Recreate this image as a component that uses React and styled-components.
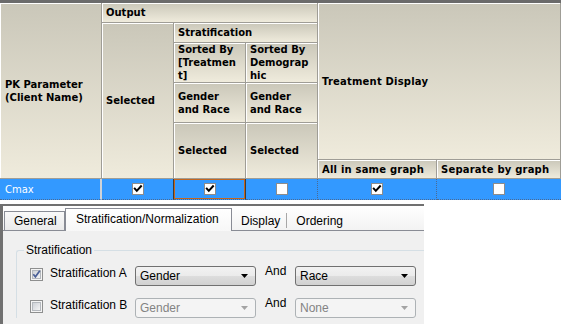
import React from 'react';
import styled, { createGlobalStyle, css } from 'styled-components';

const Global = createGlobalStyle`
  html, body { margin: 0; padding: 0; background: #ffffff; }
  body { width: 561px; height: 324px; overflow: hidden; font-family: "DejaVu Sans", sans-serif; }
`;

const Page = styled.div`
  width: 561px;
  height: 324px;
  display: flex;
  flex-direction: column;
  background: #ffffff;
  overflow: hidden;
`;

/* ---------- grid ---------- */
const Grid = styled.div`
  border-top: 3px solid #6b6b6b;
  display: flex;
  flex-direction: column;
  flex: none;
`;

const HeaderBand = styled.div`
  display: flex;
  height: 176px;
`;

const Stack = styled.div`
  display: flex;
  flex-direction: column;
`;

const Split = styled.div`
  display: flex;
`;

const HCell = styled.div`
  box-sizing: border-box;
  flex: none;
  width: ${p => p.$w}px;
  height: ${p => p.$h}px;
  display: flex;
  align-items: center;
  padding-left: ${p => (p.$pl ?? 4)}px;
  background: linear-gradient(#cac7b9, #efebdc);
  border-right: 1px solid #9f9d96;
  border-bottom: 1px solid #9f9d96;
  box-shadow: inset 1px 1px 0 #ffffff;
  font: bold 10px/13px "DejaVu Sans", sans-serif;
  letter-spacing: ${p => p.$ls || 0}px;
  color: #000000;
  white-space: nowrap;
  overflow: hidden;
`;

const HText = styled.span`
  display: block;
`;

const DataRow = styled.div`
  display: flex;
  height: 21px;
`;

const sepStyles = {
  light: css`border-right: 2px solid #cfd3d8;`,
  dark: css`border-right: 1px solid #3c3c3c;`,
  dotted: css`border-right: 1px dotted #4b6a93;`,
  none: css`border-right: 0;`,
};

const DCell = styled.div`
  box-sizing: border-box;
  flex: none;
  width: ${p => p.$w}px;
  height: 21px;
  display: flex;
  align-items: center;
  justify-content: ${p => (p.$start ? 'flex-start' : 'center')};
  padding-left: ${p => (p.$start ? '5px' : '0')};
  background: #3399ff;
  border-bottom: 1px dotted #4b6a93;
  ${p => sepStyles[p.$sep || 'none']}
  ${p => p.$focus && css`box-shadow: inset 0 0 0 1px #c4661f;`}
`;

const RowName = styled.span`
  font: 10px/13px "DejaVu Sans", sans-serif;
  color: #ffffff;
`;

const GridBox = styled.span`
  box-sizing: border-box;
  width: 12px;
  height: 12px;
  background: #ffffff;
  border: 1px solid #8c8c8c;
  display: flex;
  align-items: center;
  justify-content: center;
`;

function GridCheck({ checked }) {
  return (
    <GridBox>
      {checked && (
        <svg width="10" height="10" viewBox="0 0 10 10">
          <path d="M1.8 4.6 L3.8 6.8 L8 2.2" stroke="#000" strokeWidth="2" fill="none" strokeLinecap="square" />
        </svg>
      )}
    </GridBox>
  );
}

/* ---------- tab panel ---------- */
const TabPanel = styled.div`
  box-sizing: border-box;
  margin-top: 4px;
  width: 424px;
  flex: 1;
  border-left: 3px solid #707070;
  border-top: 2px solid #707070;
  display: flex;
  flex-direction: column;
  background: #f0f0f0;
  overflow: hidden;
`;

const TabStrip = styled.div`
  box-sizing: border-box;
  height: 25px;
  flex: none;
  display: flex;
  align-items: flex-end;
  padding-left: 1px;
  background: linear-gradient(#ffffff, #f3f3f3);
  border-bottom: 1px solid #898c95;
`;

const Tab = styled.div`
  box-sizing: border-box;
  flex: none;
  display: flex;
  align-items: center;
  font: 12px/14px "Liberation Sans", Arial, sans-serif;
  color: #000000;
  white-space: nowrap;
  ${p => p.$variant === 'boxed' && css`
    width: 61px;
    height: 19px;
    padding-left: 9px;
    border: 1px solid #898c95;
    border-bottom: 0;
    background: linear-gradient(#f9f9f9, #eaeaea);
  `}
  ${p => p.$variant === 'active' && css`
    width: 167px;
    height: 23px;
    margin-bottom: -1px;
    padding-left: 10px;
    padding-bottom: 2px;
    border: 1px solid #898c95;
    border-bottom: 0;
    background: linear-gradient(#ffffff, #f7f7f7);
    position: relative;
  `}
  ${p => p.$variant === 'plain' && css`
    height: 19px;
    padding-left: 9px;
    padding-right: ${p.$pr || 0}px;
  `}
`;

const TabSep = styled.div`
  flex: none;
  width: 1px;
  height: 15px;
  margin-bottom: 2px;
  background: #a7a7a7;
`;

const TabBody = styled.div`
  flex: 1;
  padding: 19px 0 0 13px;
`;

const GroupBox = styled.div`
  position: relative;
  border-top: 1px solid #d5dfe5;
  border-left: 1px solid #d5dfe5;
  border-top-left-radius: 3px;
  padding: 15px 0 0 13px;
  display: flex;
  flex-direction: column;
  gap: 12px;
`;

const Legend = styled.span`
  position: absolute;
  top: -8px;
  left: 7px;
  padding: 0 2px;
  background: #f0f0f0;
  font: 12px/14px "Liberation Sans", Arial, sans-serif;
  color: #000000;
`;

const FormRow = styled.div`
  display: flex;
  align-items: flex-start;
  height: 20px;
`;

const RowLabel = styled.span`
  flex: none;
  width: ${p => p.$w}px;
  margin-left: ${p => p.$ml || 0}px;
  margin-top: ${p => p.$mt || 0}px;
  font: 12px/14px "Liberation Sans", Arial, sans-serif;
  color: #000000;
  white-space: nowrap;
`;

const CheckWrap = styled.span`
  flex: none;
  width: 13px;
  height: 13px;
  display: block;
`;

function WinCheck({ checked }) {
  return (
    <CheckWrap>
      <svg width="13" height="13" viewBox="0 0 13 13">
        <defs>
          <linearGradient id={checked ? 'cg1' : 'cg0'} x1="0" y1="0" x2="1" y2="1">
            <stop offset="0" stopColor="#cbcfd5" />
            <stop offset="1" stopColor="#f6f6f6" />
          </linearGradient>
        </defs>
        <rect x="0.5" y="0.5" width="12" height="12" fill="#f4f4f4" stroke="#8e8f8f" />
        <rect x="2.5" y="2.5" width="8" height="8" fill={`url(#${checked ? 'cg1' : 'cg0'})`} stroke="#b4b8bd" />
        {checked && (
          <path d="M3.3 6.3 L5.4 8.8 L9.8 2.8" stroke="#4a5f97" strokeWidth="1.7" fill="none" />
        )}
      </svg>
    </CheckWrap>
  );
}

const Combo = styled.div`
  box-sizing: border-box;
  flex: none;
  width: 121px;
  height: 20px;
  display: flex;
  align-items: center;
  justify-content: space-between;
  padding: 0 7px 0 4px;
  border-radius: 3px;
  font: 12px/14px "Liberation Sans", Arial, sans-serif;
  ${p => p.$disabled ? css`
    border: 1px solid #adb2b5;
    background: #f4f4f4;
    color: #838383;
  ` : css`
    border: 1px solid #707070;
    background: linear-gradient(#f2f2f2, #ebebeb 50%, #dddddd 50%, #d1d1d1);
    color: #000000;
  `}
`;

function ComboBox({ value, disabled }) {
  return (
    <Combo $disabled={disabled}>
      <span>{value}</span>
      <svg width="7" height="4" viewBox="0 0 7 4">
        <polygon points="0,0 7,0 3.5,4" fill={disabled ? '#a3a3a3' : '#000'} />
      </svg>
    </Combo>
  );
}

function StratRow({ label, checked, first, second, disabled }) {
  return (
    <FormRow>
      <WinCheck checked={checked} />
      <RowLabel $w={85} $ml={7}>{label}</RowLabel>
      <ComboBox value={first} disabled={disabled} />
      <RowLabel $w={30} $ml={9} $mt={-2}>And</RowLabel>
      <ComboBox value={second} disabled={disabled} />
    </FormRow>
  );
}

export default function App() {
  return (
    <>
      <Global />
      <Page>
        <Grid>
          <HeaderBand>
            <HCell $w={102} $h={176} $pl={5}>
              <HText>PK Parameter<br />(Client Name)</HText>
            </HCell>
            <Stack>
              <HCell $w={216} $h={20}><HText>Output</HText></HCell>
              <Split>
                <HCell $w={72} $h={156}><HText>Selected</HText></HCell>
                <Stack>
                  <HCell $w={144} $h={20}><HText>Stratification</HText></HCell>
                  <Split>
                    <HCell $w={72} $h={40}><HText>Sorted By<br />[Treatmen<br />t]</HText></HCell>
                    <HCell $w={72} $h={40}><HText>Sorted By<br />Demograp<br />hic</HText></HCell>
                  </Split>
                  <Split>
                    <HCell $w={72} $h={40}><HText>Gender<br />and Race</HText></HCell>
                    <HCell $w={72} $h={40}><HText>Gender<br />and Race</HText></HCell>
                  </Split>
                  <Split>
                    <HCell $w={72} $h={56}><HText>Selected</HText></HCell>
                    <HCell $w={72} $h={56}><HText>Selected</HText></HCell>
                  </Split>
                </Stack>
              </Split>
            </Stack>
            <Stack>
              <HCell $w={243} $h={157} $ls={0.2}><HText>Treatment Display</HText></HCell>
              <Split>
                <HCell $w={119} $h={19} $ls={0.2}><HText>All in same graph</HText></HCell>
                <HCell $w={124} $h={19} $ls={0.2}><HText>Separate by graph</HText></HCell>
              </Split>
            </Stack>
          </HeaderBand>
          <DataRow>
            <DCell $w={102} $sep="light" $start><RowName>Cmax</RowName></DCell>
            <DCell $w={72} $sep="dark"><GridCheck checked /></DCell>
            <DCell $w={72} $sep="dark" $focus><GridCheck checked /></DCell>
            <DCell $w={72} $sep="dotted"><GridCheck /></DCell>
            <DCell $w={119} $sep="dotted"><GridCheck checked /></DCell>
            <DCell $w={124} $sep="none"><GridCheck /></DCell>
          </DataRow>
        </Grid>

        <TabPanel>
          <TabStrip>
            <Tab $variant="boxed">General</Tab>
            <Tab $variant="active">Stratification/Normalization</Tab>
            <Tab $variant="plain" $pr={6}>Display</Tab>
            <TabSep />
            <Tab $variant="plain">Ordering</Tab>
          </TabStrip>
          <TabBody>
            <GroupBox>
              <Legend>Stratification</Legend>
              <StratRow label="Stratification A" checked first="Gender" second="Race" />
              <StratRow label="Stratification B" first="Gender" second="None" disabled />
            </GroupBox>
          </TabBody>
        </TabPanel>
      </Page>
    </>
  );
}
